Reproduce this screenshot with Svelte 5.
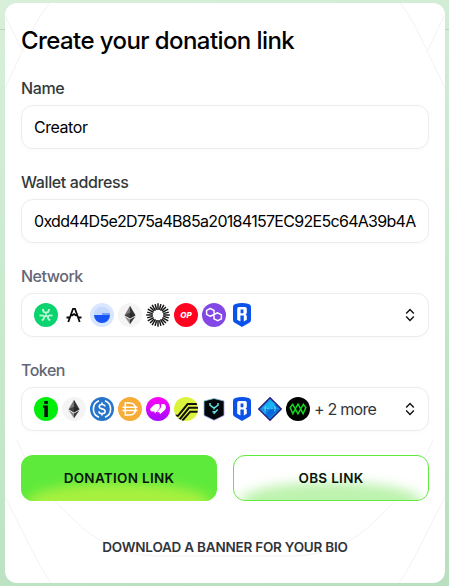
<script>
  const networks = ['flow', 'arc', 'base', 'eth', 'burst', 'op', 'polygon', 'ronin'];
  const tokens = ['idriss', 'eth', 'usdc', 'dai', 'mask', 'prime', 'yield', 'ronin', 'gem', 'wave'];
</script>

{#snippet icon(name)}
  <svg class="icon" viewBox="0 0 24 24" aria-hidden="true">
    {#if name === 'flow'}
      <circle cx="12" cy="12" r="12" fill="#0bd370" />
      <g fill="none" stroke="#b9f9d2" stroke-width="1.9">
        <path d="M9 6q0 3.7 3 3.7T15 6M5.5 12.6q4-.8 4.6 1T8 17.6M18.5 12.6q-4-.8-4.6 1t2.1 4" />
        <path d="M12 9.5v2.8l-2 1.3M12 12.3l2 1.3" stroke-width="1.2" />
      </g>
    {:else if name === 'arc'}
      <path d="M4.5 14.5h3M16.5 14.5h3M6.3 19 11 5.8h2L17.7 19M8.6 12.3h1.6L12 11l1.8 1.3h1.6" fill="none" stroke="#080808" stroke-width="1.8" />
    {:else if name === 'base'}
      <circle cx="12" cy="12" r="12" fill="#d9e6ff" />
      <circle cx="12" cy="12" r="8.2" fill="#c6d9fd" />
      <path d="M4 12h16a8 8 0 0 1-16 0z" fill="#1855f4" />
      <path d="M12 10h7.7l.3 2h-8z" fill="#75a0f8" />
    {:else if name === 'eth'}
      <circle cx="12" cy="12" r="12" fill="#f4f4f4" />
      <path d="M12 2.8 6.5 12.2 12 15.4z" fill="#777" />
      <path d="M12 2.8v12.6l5.5-3.2z" fill="#343434" />
      <path d="m6.5 13.3 5.5 7.9v-4.7z" fill="#8b8b8b" />
      <path d="m17.5 13.3-5.5 7.9v-4.7z" fill="#383838" />
      <path d="m6.5 12.2 5.5-2.5 5.5 2.5-5.5 3.2z" fill="#202020" opacity=".6" />
    {:else if name === 'burst'}
      <g stroke="#111" stroke-width="1.45">
        {#each Array(24) as _, i}
          <path d={i % 2 ? 'M12 .8v5.7' : 'M12 .2v6.7'} transform={`rotate(${i * 15} 12 12)`} />
        {/each}
      </g>
    {:else if name === 'op'}
      <circle cx="12" cy="12" r="12" fill="#ff0420" />
      <text x="12" y="14.8" text-anchor="middle" class="op">OP</text>
    {:else if name === 'polygon'}
      <circle cx="12" cy="12" r="12" fill="#8247e5" />
      <path d="M12 8V7.3L8.3 5.5 4.6 7.4v4L8.3 13.3 15.7 9.8l3.7 2v4l-3.7 1.9-3.7-1.9v-4.2M12 8v2.5" fill="none" stroke="#fff" stroke-width="1.5" stroke-linejoin="round" />
    {:else if name === 'ronin'}
      <path d="M3 4Q3 1.6 5.3 1 12-.8 18.7 1 21 1.6 21 4v13q0 1.7-1.3 2.5L12 24l-7.7-4.5Q3 18.7 3 17z" fill="#0b52eb" />
      <path fill-rule="evenodd" d="M7.2 5.7Q7.2 4 9 4h6q1.8 0 1.8 1.8v4q0 1.3-1.2 1.7 1.2.4 1.2 1.8v3.4l-3 1.9v-6h-3.4v6l-3.2-1.9zM10.6 6.4v3.8h2.8V6.4z" fill="#fff" />
    {:else if name === 'idriss'}
      <circle cx="12" cy="12" r="12" fill="#00ee09" />
      <path d="M10.3 4h3.6v3h-3.6zM9 8.5h4.9V20h-3.6v-9.2H9z" fill="#07130a" />
    {:else if name === 'usdc'}
      <circle cx="12" cy="12" r="12" fill="#2775ca" />
      <g fill="none" stroke="#fff" stroke-width="1.6">
        <path d="M9 3.8a8.8 8.8 0 0 0 0 16.4M15 3.8a8.8 8.8 0 0 1 0 16.4M15 9.5q-.3-2-3-2-2.8 0-2.8 2.1 0 1.8 2.8 2.3 3.1.5 3.1 2.5 0 2.1-3.1 2.1-2.9 0-3.2-2.2M12 5.5v2M12 16.5v2" />
      </g>
    {:else if name === 'dai'}
      <circle cx="12" cy="12" r="12" fill="#f7ac38" />
      <path d="M7.3 6h4.5q5.7 0 5.7 6t-5.7 6H7.3zM4.5 10.3h15M4.5 13.4h15" fill="none" stroke="#fff" stroke-width="1.5" />
    {:else if name === 'mask'}
      <defs><linearGradient id="mask-fill" x2="0" y2="1"><stop stop-color="#ff05f5" /><stop offset="1" stop-color="#a40aff" /></linearGradient></defs>
      <circle cx="12" cy="12" r="12" fill="url(#mask-fill)" />
      <path d="m4.2 11.8 3.5-3.6Q9 7 10.8 7h1.7q1.2 0 1.2 1.4v2q0 1-.8 1.8l-4 4.3-.5-2H6.3Q4.8 14.5 4.2 13z" fill="#fff" />
      <path d="M15.2 7.1h2.4q2.2.4 2.2 2.5v1.2q0 1.2-1 2.2L14 17.3l-.8-2.2-2.4.1 3.2-3.4q1.1-1.1 1.2-2.5z" fill="#fff" />
    {:else if name === 'prime'}
      <defs><clipPath id="prime-clip"><circle cx="12" cy="12" r="12" /></clipPath></defs>
      <g clip-path="url(#prime-clip)">
        <path d="M0 0h24v24H0z" fill="#dcf33e" />
        <path d="M1 18.8h3L13.6 7H24M3 22h3l9-11.2h9M8 24l8.3-9.3H24" fill="none" stroke="#11120d" stroke-width="2" />
      </g>
    {:else if name === 'yield'}
      <defs><linearGradient id="yield-edge" x2="1" y2="1"><stop stop-color="#70ddcf" /><stop offset="1" stop-color="#b487ed" /></linearGradient></defs>
      <path d="M12 1.5 22 4v14.4l-10 4.9-10-4.9V4z" fill="#03060a" stroke="url(#yield-edge)" stroke-width=".8" />
      <path d="M8 6v2.2l3 2.3h2l3-2.3V6M12 10.5v2M15.6 12.5l-2 2.2h-3.2M13.6 14.7l-2 2.1" fill="none" stroke="#65dfe0" stroke-width="1.5" />
    {:else if name === 'gem'}
      <defs><linearGradient id="gem-fill" x2="1" y2="1"><stop stop-color="#194fc8" /><stop offset=".48" stop-color="#18bcf5" /><stop offset=".55" stop-color="#086cd9" /><stop offset="1" stop-color="#0ba8ef" /></linearGradient></defs>
      <path d="M12 .8 23.2 12 12 23.2.8 12z" fill="url(#gem-fill)" stroke="#262083" stroke-width="1.5" />
      <path d="m12 3 8 9H4z" fill="#19b9f4" opacity=".6" />
      <path d="m4 12 8 8 8-8z" fill="#075fe0" opacity=".6" />
      <path d="M8 9.8H7v4h1M16 9.8h1v4h-1M10 11v1.3M14 11v1.3" fill="none" stroke="#82e8fa" stroke-width=".8" />
    {:else if name === 'wave'}
      <circle cx="12" cy="12" r="12" fill="#000" />
      <path d="M6.7 7.3 9.3 12l-2.4 4.7L4.2 10.6zM12 7l2.7 5-2.7 4.7L9.3 12zM17.3 7.3l2.5 3.3-2.7 6.1-2.4-4.7z" fill="none" stroke="#15d61d" stroke-width="1.5" />
    {/if}
  </svg>
{/snippet}

{#snippet chevrons()}
  <svg class="chevrons" viewBox="0 0 12 14" aria-hidden="true">
    <path d="m2.2 5.5 3.8-4 3.8 4M2.2 8.5l3.8 4 3.8-4" />
  </svg>
{/snippet}

<div class="page">
  <main class="card">
    <svg class="pattern" viewBox="0 0 440 580" aria-hidden="true">
      <path d="M45 0Q35 11 25 32L0 85M0 13l18 36M395 0q10 12 20 33l25 52M439 13l-17 36M12 437l8 18q17 34 47 60 37 38 86 38h134q49 0 86-38 30-26 47-60l8-18M0 494l31 61q7 14 15 25M440 494l-31 61q-7 14-15 25" />
    </svg>
    <h1>Create your donation link</h1>
    <div class="fields">
      <div class="field">
        <div class="label">Name</div>
        <div class="box">Creator</div>
      </div>
      <div class="field">
        <div class="label">Wallet address</div>
        <div class="box"><span class="address">0xdd44D5e2D75a4B85a20184157EC92E5c64A39b4A</span></div>
      </div>
      <div class="field">
        <div class="label muted">Network</div>
        <div class="box select">
          <div class="icons">{#each networks as name}{@render icon(name)}{/each}</div>
          {@render chevrons()}
        </div>
      </div>
      <div class="field">
        <div class="label muted">Token</div>
        <div class="box select">
          <div class="icons">{#each tokens as name}{@render icon(name)}{/each}<span class="more">+ 2 more</span></div>
          {@render chevrons()}
        </div>
      </div>
    </div>
    <div class="actions">
      <button class="primary">DONATION LINK</button>
      <button class="outline">OBS LINK</button>
    </div>
    <button class="download">DOWNLOAD A BANNER FOR YOUR BIO</button>
  </main>
</div>

<style>
  :global(body) { margin: 0; }
  .page {
    box-sizing: border-box;
    width: 449px;
    height: 586px;
    padding: 3px 4px 3px 5px;
    overflow: hidden;
    background:
      linear-gradient(#b8d6bc, #b8d6bc) 0 29px / 100% 1px no-repeat,
      linear-gradient(165deg, #d8efda, #c5e8ca 55%, #b9dfc0);
    font-family: Inter, "Liberation Sans", sans-serif;
  }
  .card {
    position: relative;
    isolation: isolate;
    box-sizing: border-box;
    display: flex;
    flex-direction: column;
    height: 580px;
    padding: 16px;
    overflow: hidden;
    border-radius: 12px;
    background: #fff;
  }
  .pattern { position: absolute; z-index: -1; inset: 0; width: 440px; height: 580px; }
  .pattern path { fill: none; stroke: #f2f2f2; stroke-width: 1; }
  h1 {
    margin: 0;
    height: 44px;
    font-size: 24px;
    line-height: 44px;
    font-weight: 500;
    letter-spacing: -.58px;
    color: #000;
    white-space: nowrap;
  }
  .fields { display: flex; flex-direction: column; gap: 21px; margin-top: 13px; }
  .field { display: flex; flex-direction: column; gap: 5px; }
  .label {
    height: 24px;
    font-size: 16px;
    line-height: 24px;
    font-weight: 500;
    letter-spacing: -.38px;
    color: #33393a;
  }
  .muted { color: #646675; letter-spacing: -.5px; }
  .box {
    box-sizing: border-box;
    display: flex;
    align-items: center;
    height: 44px;
    padding: 0 12px;
    border: 1px solid #ececec;
    border-radius: 12px;
    background: #fff;
    box-shadow: 0 1px 5px #00000007;
    font-size: 16px;
    letter-spacing: -.45px;
    color: #000;
    white-space: nowrap;
  }
  .address { letter-spacing: -.7px; }
  .select { justify-content: space-between; }
  .icons { display: flex; align-items: center; gap: 4px; }
  .icon { width: 24px; height: 24px; flex: none; }
  .op { font: italic 800 8px Inter, sans-serif; fill: #fff; letter-spacing: .1px; }
  .more { color: #30353c; letter-spacing: -.75px; }
  .chevrons { width: 12px; height: 14px; }
  .chevrons path { fill: none; stroke: #111; stroke-width: 1.4; }
  .actions { display: grid; grid-template-columns: 1fr 1fr; gap: 16px; margin-top: 24px; }
  button { font-family: inherit; font-weight: 600; white-space: nowrap; }
  .actions button {
    position: relative;
    isolation: isolate;
    overflow: hidden;
    box-sizing: border-box;
    height: 46px;
    padding: 0;
    border: 1px solid #5eea3b;
    border-radius: 12px;
    font-size: 13.5px;
    letter-spacing: .3px;
    color: #07150a;
  }
  .actions button::before {
    content: "";
    position: absolute;
    z-index: -1;
    right: 6px;
    bottom: -20px;
    left: 6px;
    height: 38px;
    border-radius: 50%;
    filter: blur(6px);
  }
  .actions .primary { border: 0; background: #5eea3b; }
  .primary::before { background: #a8f040; }
  .actions .outline { background: #fff; }
  .outline::before { background: #bdf3ae; }
  .download {
    align-self: center;
    height: 30px;
    margin-top: 31px;
    padding: 0;
    border: 0;
    background: none;
    font-size: 13.5px;
    letter-spacing: -.22px;
    color: #31343b;
  }
</style>
